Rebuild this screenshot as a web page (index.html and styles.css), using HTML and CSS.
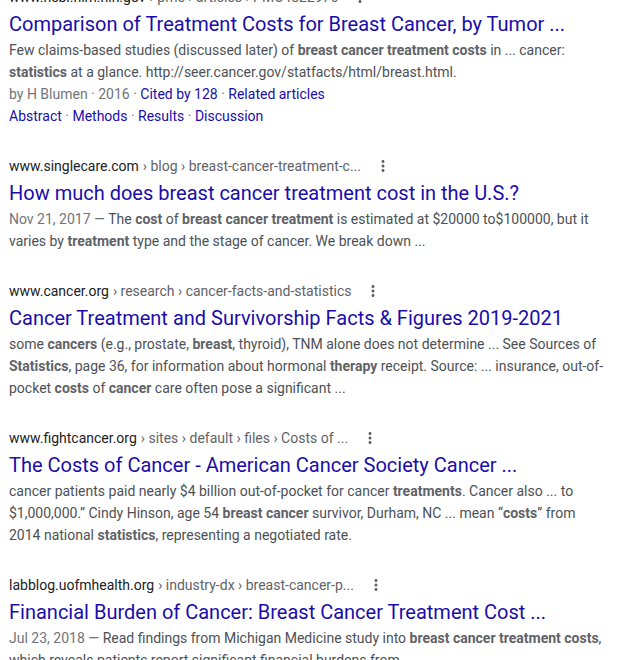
FILE: index.html
```html
<!DOCTYPE html>
<html lang="en">
<head>
    <meta charset="UTF-8">
    <meta name="viewport" content="width=device-width, initial-scale=1.0">
    <title>breast cancer treatment costs statistics - Search</title>
    <link rel="stylesheet" href="styles.css">
</head>
<body>
    <div class="results">

        <div class="result">
            <div class="cite">
                <span class="domain">www.ncbi.nlm.nih.gov</span>
                <span class="path">› pmc › articles › PMC4822976</span>
                <span class="more"><svg viewBox="0 0 24 24"><path d="M12 8c1.1 0 2-.9 2-2s-.9-2-2-2-2 .9-2 2 .9 2 2 2zm0 2c-1.1 0-2 .9-2 2s.9 2 2 2 2-.9 2-2-.9-2-2-2zm0 6c-1.1 0-2 .9-2 2s.9 2 2 2 2-.9 2-2-.9-2-2-2z"/></svg></span>
            </div>
            <a class="title" href="#">Comparison of Treatment Costs for Breast Cancer, by Tumor ...</a>
            <div class="snippet">Few claims-based studies (discussed later) of <b>breast cancer treatment costs</b> in ... cancer: <b>statistics</b> at a glance. http://seer.cancer.gov/statfacts/html/breast.html.</div>
            <div class="meta">by H Blumen · 2016 · <a href="#">Cited by 128</a> · <a href="#">Related articles</a></div>
            <div class="sitelinks"><a href="#">Abstract</a> · <a href="#">Methods</a> · <a href="#">Results</a> · <a href="#">Discussion</a></div>
        </div>

        <div class="result">
            <div class="cite">
                <span class="domain">www.singlecare.com</span>
                <span class="path">› blog › breast-cancer-treatment-c...</span>
                <span class="more"><svg viewBox="0 0 24 24"><path d="M12 8c1.1 0 2-.9 2-2s-.9-2-2-2-2 .9-2 2 .9 2 2 2zm0 2c-1.1 0-2 .9-2 2s.9 2 2 2 2-.9 2-2-.9-2-2-2zm0 6c-1.1 0-2 .9-2 2s.9 2 2 2 2-.9 2-2-.9-2-2-2z"/></svg></span>
            </div>
            <a class="title" href="#">How much does breast cancer treatment cost in the U.S.?</a>
            <div class="snippet"><span class="date">Nov 21, 2017 — </span>The <b>cost</b> of <b>breast cancer treatment</b> is estimated at $20000 to$100000, but it varies by <b>treatment</b> type and the stage of cancer. We break down ...</div>
        </div>

        <div class="result">
            <div class="cite">
                <span class="domain">www.cancer.org</span>
                <span class="path">› research › cancer-facts-and-statistics</span>
                <span class="more"><svg viewBox="0 0 24 24"><path d="M12 8c1.1 0 2-.9 2-2s-.9-2-2-2-2 .9-2 2 .9 2 2 2zm0 2c-1.1 0-2 .9-2 2s.9 2 2 2 2-.9 2-2-.9-2-2-2zm0 6c-1.1 0-2 .9-2 2s.9 2 2 2 2-.9 2-2-.9-2-2-2z"/></svg></span>
            </div>
            <a class="title" href="#">Cancer Treatment and Survivorship Facts &amp; Figures 2019-2021</a>
            <div class="snippet">some <b>cancers</b> (e.g., prostate, <b>breast</b>, thyroid), TNM alone does not determine ... See Sources of <b>Statistics</b>, page 36, for information about hormonal <b>therapy</b> receipt. Source: ... insurance, out-of-pocket <b>costs</b> of <b>cancer</b> care often pose a significant ...</div>
        </div>

        <div class="result">
            <div class="cite">
                <span class="domain">www.fightcancer.org</span>
                <span class="path">› sites › default › files › Costs of ...</span>
                <span class="more"><svg viewBox="0 0 24 24"><path d="M12 8c1.1 0 2-.9 2-2s-.9-2-2-2-2 .9-2 2 .9 2 2 2zm0 2c-1.1 0-2 .9-2 2s.9 2 2 2 2-.9 2-2-.9-2-2-2zm0 6c-1.1 0-2 .9-2 2s.9 2 2 2 2-.9 2-2-.9-2-2-2z"/></svg></span>
            </div>
            <a class="title" href="#">The Costs of Cancer - American Cancer Society Cancer ...</a>
            <div class="snippet">cancer patients paid nearly $4 billion out-of-pocket for cancer <b>treatments</b>. Cancer also ... to $1,000,000.” Cindy Hinson, age 54 <b>breast cancer</b> survivor, Durham, NC ... mean “<b>costs</b>” from 2014 national <b>statistics</b>, representing a negotiated rate.</div>
        </div>

        <div class="result">
            <div class="cite">
                <span class="domain">labblog.uofmhealth.org</span>
                <span class="path">› industry-dx › breast-cancer-p...</span>
                <span class="more"><svg viewBox="0 0 24 24"><path d="M12 8c1.1 0 2-.9 2-2s-.9-2-2-2-2 .9-2 2 .9 2 2 2zm0 2c-1.1 0-2 .9-2 2s.9 2 2 2 2-.9 2-2-.9-2-2-2zm0 6c-1.1 0-2 .9-2 2s.9 2 2 2 2-.9 2-2-.9-2-2-2z"/></svg></span>
            </div>
            <a class="title" href="#">Financial Burden of Cancer: Breast Cancer Treatment Cost ...</a>
            <div class="snippet"><span class="date">Jul 23, 2018 — </span>Read findings from Michigan Medicine study into <b>breast cancer treatment costs</b>, which reveals patients report significant financial burdens from ...</div>
        </div>

    </div>
</body>
</html>
```

FILE: styles.css
```css
body { margin: 0; background: #fff; font-family: Roboto, "Liberation Sans", Arial, sans-serif; }
a { color: #1a0dab; text-decoration: none; }

.results { margin-top: -14px; padding: 0 11px 0 9px; }
.result { margin-bottom: 28px; }

.cite { display: flex; align-items: center; height: 22px; font-size: 14px; line-height: 22px; white-space: nowrap; }
.domain { color: #202124; }
.path { color: #5f6368; margin-left: 4px; }
.more { display: flex; align-items: center; justify-content: center; width: 20px; height: 22px; margin-left: 12px; }
.more svg { width: 18px; height: 18px; fill: #5f6368; }

.title { display: block; margin-top: 3px; font-size: 20px; line-height: 26px; white-space: nowrap; }

.snippet { margin-top: 2px; font-size: 14px; line-height: 22px; color: #4d5156; }
.snippet b { color: #5f6368; font-weight: 700; }
.date { color: #70757a; }

.meta, .sitelinks { font-size: 14px; line-height: 22px; color: #70757a; }
```
